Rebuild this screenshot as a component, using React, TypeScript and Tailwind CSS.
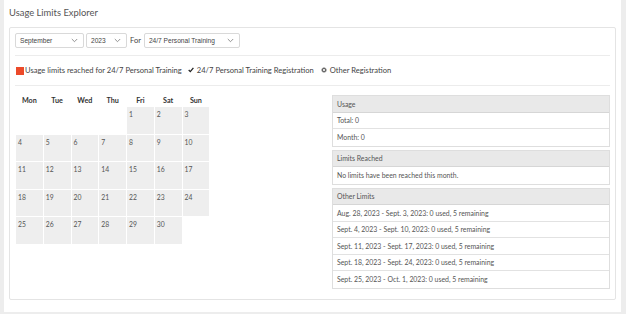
import React from "react";

const Chevron = () => (
  <svg width="7" height="5" viewBox="0 0 7 5" className="shrink-0">
    <path d="M0.8 1 L3.5 3.7 L6.2 1" fill="none" stroke="#777" strokeWidth="0.8" />
  </svg>
);

function Select({ label, w }: { label: string; w: string }) {
  return (
    <div
      className={`${w} h-[15px] border border-[#d9d9d9] rounded-[2px] bg-white flex items-center justify-between pl-[4px] pr-[5px] text-[6.6px] text-[#444]`}
      style={{ fontFamily: '"Liberation Sans", Arial, sans-serif' }}
    >
      <span>{label}</span>
      <Chevron />
    </div>
  );
}

const days: (number | null)[] = [
  null, null, null, null, 1, 2, 3,
  4, 5, 6, 7, 8, 9, 10,
  11, 12, 13, 14, 15, 16, 17,
  18, 19, 20, 21, 22, 23, 24,
  25, 26, 27, 28, 29, 30, null,
];

function Panel({ title, rows }: { title: string; rows: string[] }) {
  return (
    <div className="border border-[#dedede] mb-[3px]">
      <div className="h-[16.5px] bg-[#e9e9e9] border-b border-[#d6d6d6] flex items-center pl-[4px] text-[6.9px] text-[#555]">
        {title}
      </div>
      {rows.map((r, i) => (
        <div
          key={i}
          className={`h-[16.5px] flex items-center pl-[4px] text-[6.9px] text-[#555] bg-white ${i < rows.length - 1 ? "border-b border-[#e2e2e2]" : ""}`}
        >
          {r}
        </div>
      ))}
    </div>
  );
}

export default function App() {
  return (
    <div
      className="w-[626px] h-[314px] bg-[#ededed] pl-[4px] pr-[5px] pb-[2px] overflow-hidden"
      style={{ fontFamily: 'Lato, "Noto Sans", sans-serif' }}
    >
      <div className="bg-white h-full px-[5px] flex flex-col">
        <div className="h-[27px] flex items-center text-[9.4px] text-[#555]">Usage Limits Explorer</div>
        <div className="border border-[#e4e4e4] rounded-[2px] px-[5px] pt-[5px] h-[273px]">
          <div className="flex items-center gap-[2px] h-[15px]">
            <Select label="September" w="w-[69px]" />
            <Select label="2023" w="w-[41px]" />
            <span className="text-[7.5px] text-[#444] px-[1px]">For</span>
            <Select label="24/7 Personal Training" w="w-[96px]" />
          </div>
          <div className="mt-[7px] border-t border-[#ececec]" />
          <div className="h-[29px] flex items-center text-[7.6px] text-[#444] pt-[1px]">
            <span className="w-[8px] h-[8px] bg-[#ec4a2a] ml-[1px] mr-[1px]" />
            <span>Usage limits reached for 24/7 Personal Training</span>
            <svg width="6" height="6" viewBox="0 0 6 6" className="ml-[6px] mr-[3px] mb-[2px]">
              <path d="M0.7 3 L2.3 4.6 L5.4 0.8" fill="none" stroke="#222" strokeWidth="1.3" />
            </svg>
            <span>24/7 Personal Training Registration</span>
            <svg width="6" height="6" viewBox="0 0 6 6" className="ml-[7px] mr-[3px] mb-[2px]">
              <circle cx="3" cy="3" r="2.5" fill="#666" />
              <path d="M1.7 1.7 L4.3 4.3 M4.3 1.7 L1.7 4.3" stroke="#fff" strokeWidth="0.8" />
            </svg>
            <span>Other Registration</span>
          </div>
          <div className="border-t border-[#ececec]" />
          <div className="flex mt-[9px]">
            <div className="w-[317px] pl-[1px]">
              <div className="grid grid-cols-[repeat(7,26.75px)] gap-x-[1px] h-[12px] items-center">
                {["Mon", "Tue", "Wed", "Thu", "Fri", "Sat", "Sun"].map((d) => (
                  <div key={d} className="text-center text-[7.2px] font-bold text-[#333]">
                    {d}
                  </div>
                ))}
              </div>
              <div className="grid grid-cols-[repeat(7,26.75px)] auto-rows-[26.5px] gap-[1px]">
                {days.map((d, i) =>
                  d === null ? (
                    <div key={i} />
                  ) : (
                    <div key={i} className="bg-[#eeeeee] text-[6.8px] text-[#555] pl-[2px] pt-[3px] leading-[9px]">
                      {d}
                    </div>
                  )
                )}
              </div>
            </div>
            <div className="flex-1">
              <Panel title="Usage" rows={["Total: 0", "Month: 0"]} />
              <Panel title="Limits Reached" rows={["No limits have been reached this month."]} />
              <Panel
                title="Other Limits"
                rows={[
                  "Aug. 28, 2023 - Sept. 3, 2023: 0 used, 5 remaining",
                  "Sept. 4, 2023 - Sept. 10, 2023: 0 used, 5 remaining",
                  "Sept. 11, 2023 - Sept. 17, 2023: 0 used, 5 remaining",
                  "Sept. 18, 2023 - Sept. 24, 2023: 0 used, 5 remaining",
                  "Sept. 25, 2023 - Oct. 1, 2023: 0 used, 5 remaining",
                ]}
              />
            </div>
          </div>
        </div>
      </div>
    </div>
  );
}
